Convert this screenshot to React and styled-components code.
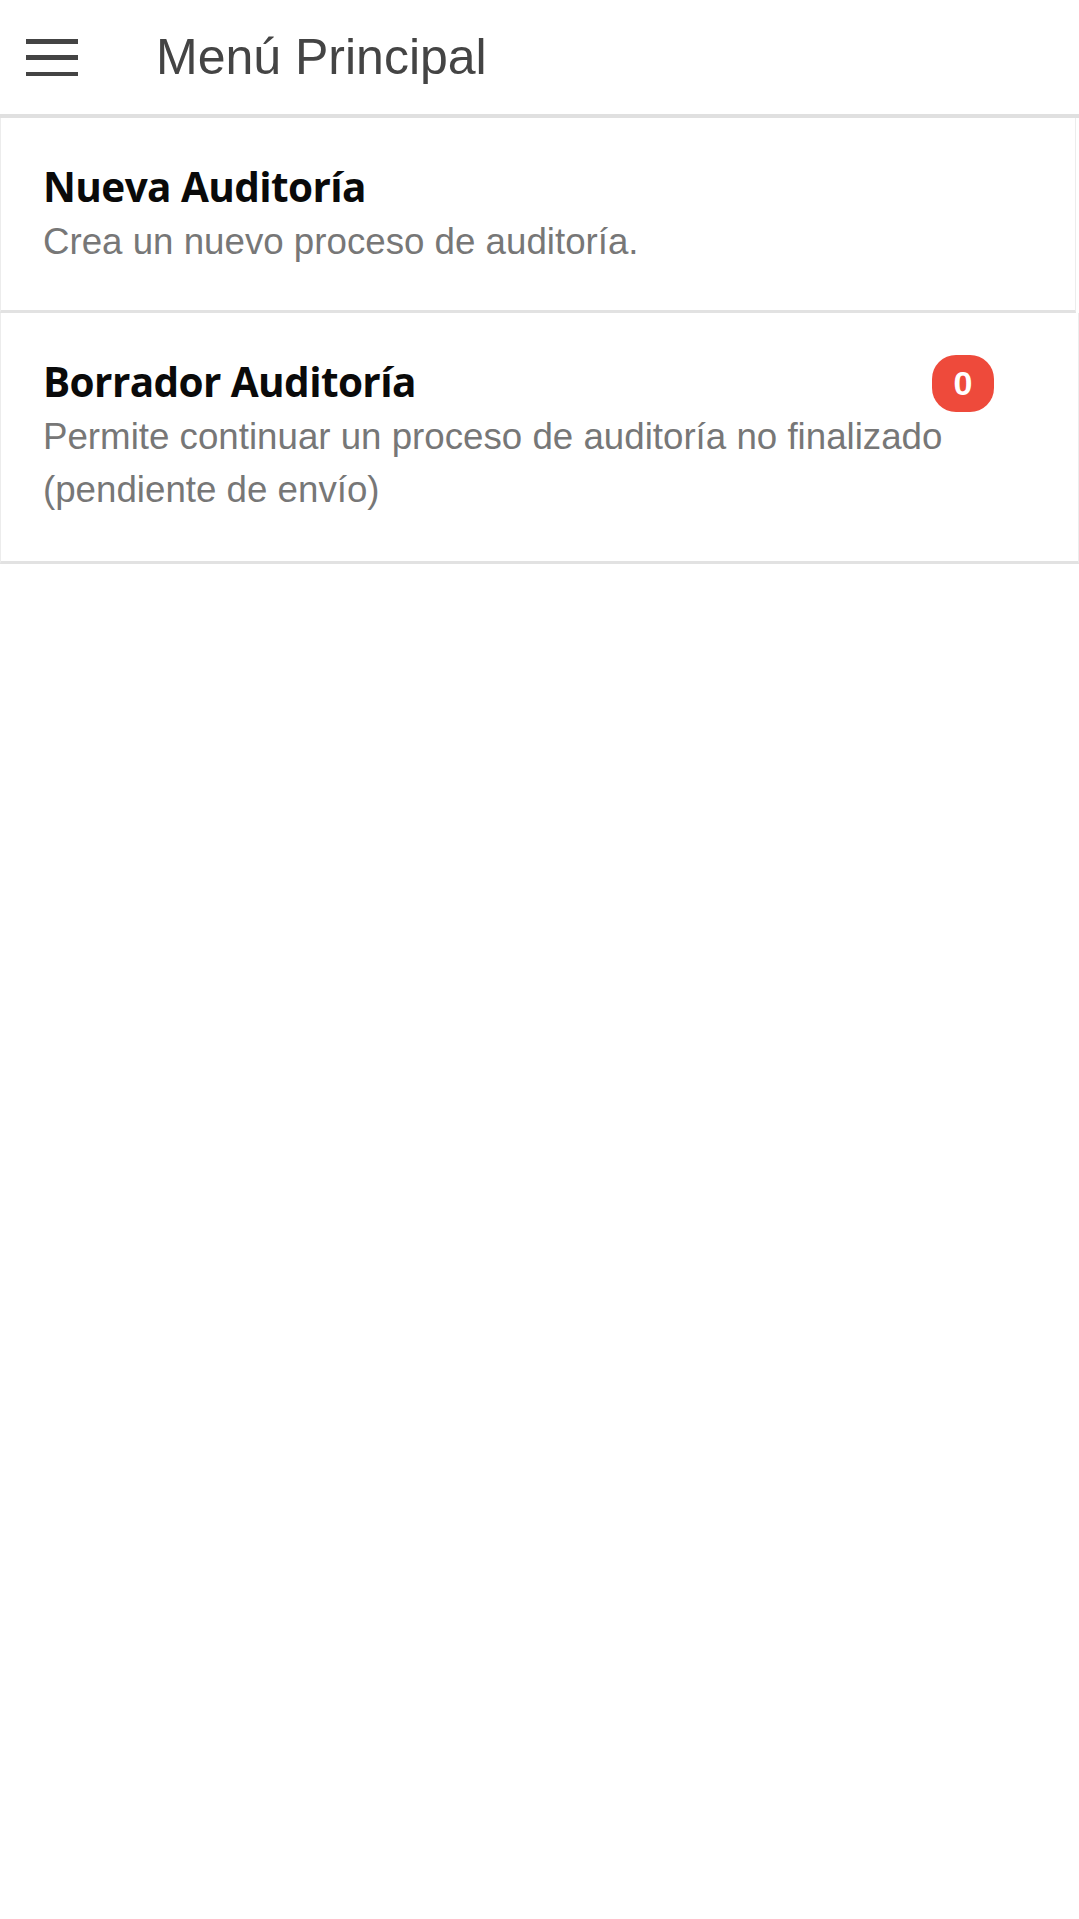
import React from "react";
import styled, { createGlobalStyle } from "styled-components";

const GlobalStyle = createGlobalStyle`
  html, body {
    margin: 0;
    padding: 0;
    background: #ffffff;
  }
  body {
    font-family: "Liberation Sans", Arial, sans-serif;
  }
  * { box-sizing: border-box; }
`;

const Page = styled.div`
  min-height: 1919px;
  background: #ffffff;
`;

const Header = styled.header`
  height: 118px;
  display: flex;
  align-items: center;
  padding: 0 0 0 26px;
  border-bottom: 4px solid #e0e0e0;
  background: #fff;
`;

const MenuButton = styled.button`
  width: 52px;
  height: 37px;
  padding: 0;
  border: none;
  background: transparent;
  display: flex;
  flex-direction: column;
  justify-content: space-between;
  cursor: pointer;
  margin-top: 1px;
`;

const MenuBar = styled.span`
  display: block;
  width: 52px;
  height: 4.5px;
  background: #444;
`;

const Title = styled.h1`
  margin: 0 0 0 78px;
  font-family: "Liberation Sans", Arial, sans-serif;
  font-weight: 400;
  font-size: 50px;
  color: #444;
  line-height: normal;
`;

const List = styled.div`
  display: flex;
  flex-direction: column;
  margin-right: 3px;
`;

const Item = styled.div`
  display: flex;
  align-items: flex-start;
  padding: ${(p) => (p.$last ? "44px 84px 45px 42px" : "44px 84px 42px 42px")};
  border-left: 1px solid #ececec;
  border-right: 1px solid #ececec;
  border-bottom: 3px solid #e2e2e2;
  margin-right: ${(p) => (p.$last ? "-3px" : "0")};
  background: #fff;
`;

const ItemBody = styled.div`
  flex: 1;
  min-width: 0;
`;

const TitleRow = styled.div`
  display: flex;
  align-items: center;
  justify-content: space-between;
  height: 50px;
`;

const ItemTitle = styled.h2`
  margin: 0;
  font-family: "Open Sans", "Noto Sans", sans-serif;
  font-weight: 700;
  font-size: 40.5px;
  line-height: 50px;
  color: #0a0a0a;
  letter-spacing: -0.6px;
`;

const ItemText = styled.p`
  margin: 3px 0 0;
  font-family: "Liberation Sans", Arial, sans-serif;
  font-size: 36.7px;
  line-height: 53px;
  color: #777;
  max-width: 920px;
`;

const Badge = styled.span`
  display: inline-flex;
  align-items: center;
  justify-content: center;
  width: 62px;
  height: 57px;
  border-radius: 24px;
  background: #ee4a3b;
  color: #fff;
  font-family: "Liberation Sans", Arial, sans-serif;
  font-weight: 700;
  font-size: 34px;
  margin-top: 3px;
`;

const items = [
  {
    title: "Nueva Auditoría",
    text: "Crea un nuevo proceso de auditoría.",
  },
  {
    title: "Borrador Auditoría",
    text: "Permite continuar un proceso de auditoría no finalizado (pendiente de envío)",
    badge: 0,
  },
];

export default function App() {
  return (
    <Page>
      <GlobalStyle />
      <Header>
        <MenuButton aria-label="menu">
          <MenuBar />
          <MenuBar />
          <MenuBar />
        </MenuButton>
        <Title>Menú Principal</Title>
      </Header>
      <List>
        {items.map((it, i) => (
          <Item key={i} $last={i === items.length - 1}>
            <ItemBody>
              <TitleRow>
                <ItemTitle>{it.title}</ItemTitle>
                {it.badge !== undefined && <Badge>{it.badge}</Badge>}
              </TitleRow>
              <ItemText>{it.text}</ItemText>
            </ItemBody>
          </Item>
        ))}
      </List>
    </Page>
  );
}
